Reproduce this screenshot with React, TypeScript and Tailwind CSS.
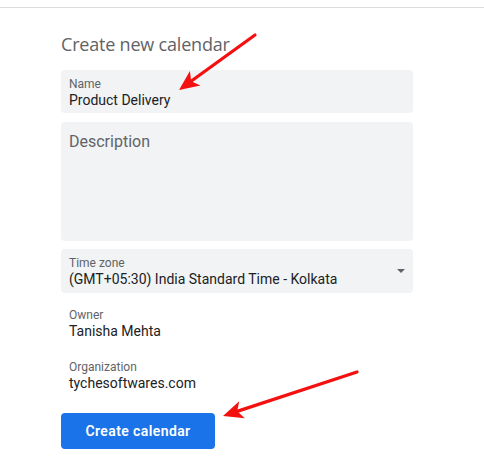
import React from "react";

function Arrow({ x1, y1, x2, y2 }: { x1: number; y1: number; x2: number; y2: number }) {
  const dx = x2 - x1;
  const dy = y2 - y1;
  const len = Math.hypot(dx, dy);
  const ux = dx / len;
  const uy = dy / len;
  const hl = 20;
  const hw = 9;
  const bx = x2 - hl * ux;
  const by = y2 - hl * uy;
  const nx = -uy;
  const ny = ux;
  const pts = `${x2},${y2} ${bx + hw * nx},${by + hw * ny} ${bx + 5 * ux},${by + 5 * uy} ${bx - hw * nx},${by - hw * ny}`;
  return (
    <g>
      <line x1={x1} y1={y1} x2={bx + 6 * ux} y2={by + 6 * uy} stroke="#f51010" strokeWidth={3.2} strokeLinecap="round" />
      <polygon points={pts} fill="#f51010" />
    </g>
  );
}

export default function App() {
  const body = { fontFamily: "Roboto, 'Liberation Sans', sans-serif" };
  return (
    <div className="relative w-[484px] h-[476px] bg-white overflow-hidden" style={body}>
      <div className="h-[8px] border-b border-[#dadce0]" />
      <div className="pl-[61px] w-[413px]">
        <h1 className="mt-[24px] text-[18px] leading-[24px] text-[#5f6368] font-normal tracking-[-0.2px]" style={{ fontFamily: "'Open Sans', Roboto, sans-serif" }}>
          Create new calendar
        </h1>
        <div className="mt-[14px] h-[43px] rounded-[4px] bg-[#f1f3f4] pl-[8px] pt-[6px]">
          <div className="text-[12px] leading-[16px] text-[#5f6368]">Name</div>
          <div className="text-[14px] leading-[17px] text-[#202124]">Product Delivery</div>
        </div>
        <div className="mt-[9px] h-[119px] rounded-[4px] bg-[#f1f3f4] pl-[8px] pt-[8px]">
          <div className="text-[16px] leading-[24px] text-[#5f6368]">Description</div>
        </div>
        <div className="mt-[8px] h-[44px] rounded-[4px] bg-[#f1f3f4] pl-[8px] pt-[6px] flex items-start justify-between">
          <div>
            <div className="text-[12px] leading-[16px] text-[#5f6368]">Time zone</div>
            <div className="text-[14px] leading-[17px] text-[#202124]">(GMT+05:30) India Standard Time - Kolkata</div>
          </div>
          <div className="mt-[14px] mr-[8px] w-0 h-0 border-l-[4px] border-r-[4px] border-t-[4px] border-l-transparent border-r-transparent border-t-[#5f6368]" />
        </div>
        <div className="mt-[14px] pl-[8px]">
          <div className="text-[12px] leading-[16px] text-[#5f6368]">Owner</div>
          <div className="text-[14px] leading-[17px] text-[#202124]">Tanisha Mehta</div>
        </div>
        <div className="mt-[19px] pl-[8px]">
          <div className="text-[12px] leading-[16px] text-[#5f6368]">Organization</div>
          <div className="text-[14px] leading-[17px] text-[#202124]">tychesoftwares.com</div>
        </div>
        <button className="mt-[21px] w-[154px] h-[36px] rounded-[4px] bg-[#1a73e8] text-white text-[14px] font-semibold tracking-[0.4px] flex items-center justify-center">
          Create calendar
        </button>
      </div>
      <svg className="absolute left-0 top-0 pointer-events-none" width={484} height={476}>
        <Arrow x1={255} y1={35} x2={179} y2={90} />
        <Arrow x1={357} y1={372} x2={223} y2={416} />
      </svg>
    </div>
  );
}
